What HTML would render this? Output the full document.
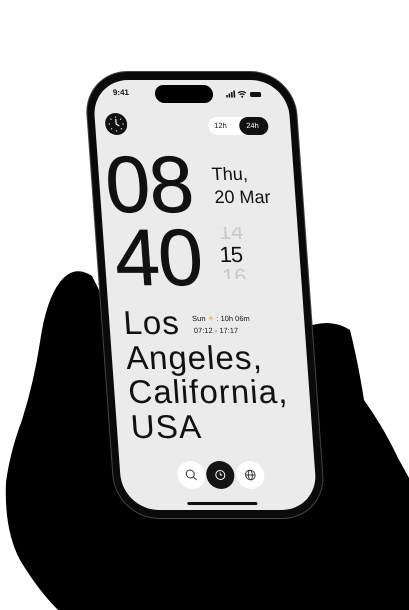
<!DOCTYPE html>
<html><head><meta charset="utf-8"><style>
html,body{margin:0;padding:0;background:#fff;width:409px;height:610px;overflow:hidden;font-family:"Liberation Sans",sans-serif}
.abs{position:absolute}
#sk{position:absolute;left:0;top:0;width:409px;height:610px;transform-origin:0 80px;transform:skewX(4.1deg)}
.t{position:absolute;white-space:nowrap;line-height:1;color:#111}
</style></head><body>
<svg class="abs" style="left:0;top:0" width="409" height="610">
<path d="M60,282 Q74,264 92,276 L104,300 L300,330 Q328,316 350,330 Q358,362 364,400 Q384,428 398,458 L409,478 L409,610 L58,610 Q38,590 20,560 Q4,530 6,482 Q10,452 22,420 Q34,382 40,342 Q46,300 60,282 Z" fill="#000"/>
</svg>
<div id="sk">
  <div class="abs" style="left:85px;top:72px;width:209px;height:446px;border-radius:43px;background:#0a0a0a;box-shadow:0 0 0 1px #444"></div>
  <div class="abs" style="left:92px;top:80px;width:195px;height:430px;border-radius:36px;background:#ebebeb;overflow:hidden">
  </div>
  <div class="t" style="left:112px;top:89px;font-size:8px;font-weight:bold">9:41</div>
  <div class="abs" style="left:154px;top:85px;width:58px;height:18px;border-radius:9px;background:#000"></div>
  <svg class="abs" style="left:225px;top:90px" width="38" height="9">
    <rect x="0" y="5" width="1.6" height="2.5" fill="#111"/><rect x="2.5" y="3.5" width="1.6" height="4" fill="#111"/><rect x="5" y="2" width="1.6" height="5.5" fill="#111"/><rect x="7.5" y="0.5" width="1.6" height="7" fill="#111"/>
    <path d="M12,3 Q16,0 20,3 M13.5,4.8 Q16,3 18.5,4.8" stroke="#111" stroke-width="1.2" fill="none"/><circle cx="16" cy="6.8" r="1" fill="#111"/>
    <rect x="24" y="2" width="11" height="5" rx="1.5" fill="#111"/>
  </svg>
  <svg class="abs" style="left:102px;top:113px" width="22" height="22" viewBox="0 0 22 22">
    <circle cx="11" cy="11" r="11" fill="#111"/>
    <path d="M11,6 V11 L14,13" stroke="#fff" stroke-width="1.2" fill="none"/>
    <path d="M11,3.5v1.3M11,17.2v1.3M3.5,11h1.3M17.2,11h1.3M5.7,5.7l.9.9M15.4,15.4l.9.9M5.7,16.3l.9-.9M15.4,6.6l.9-.9" stroke="#fff" stroke-width="1"/>
  </svg>
  <div class="abs" style="left:205px;top:117px;width:60px;height:18px;border-radius:9px;background:#fff"></div>
  <div class="t" style="left:211px;top:122px;font-size:7.5px">12h</div>
  <div class="abs" style="left:236px;top:117px;width:29px;height:18px;border-radius:9px;background:#111"></div>
  <div class="t" style="left:243px;top:122px;font-size:7.5px;color:#fff">24h</div>
  <div class="t" style="left:98px;top:145px;font-size:80px;-webkit-text-stroke:0.6px #111;letter-spacing:-1px">08</div>
  <div class="t" style="left:205px;top:165px;font-size:18px">Thu,</div>
  <div class="t" style="left:206px;top:188px;font-size:18px">20 Mar</div>
  <div class="t" style="left:102px;top:218px;font-size:80px;-webkit-text-stroke:0.6px #111;letter-spacing:-1px">40</div>
  <div class="abs" style="left:205px;top:227px;width:40px;height:14px;overflow:hidden"><div class="t" style="left:3px;top:-6px;font-size:22px;color:#c9c9c9">14</div></div>
  <div class="t" style="left:207px;top:244px;font-size:22px;letter-spacing:-1px">15</div>
  <div class="abs" style="left:205px;top:266px;width:40px;height:13px;overflow:hidden"><div class="t" style="left:3px;top:0;font-size:22px;color:#c9c9c9">16</div></div>
  <div class="abs" style="left:106px;top:306px;font-size:33px;line-height:34.5px;letter-spacing:1px;color:#111;white-space:nowrap">Los<br>Angeles,<br>California,<br>USA</div>
  <div class="t" style="left:175px;top:315px;font-size:7.5px">Sun <span style="color:#f0b400">☀</span> : 10h 06m</div>
  <div class="t" style="left:176px;top:327px;font-size:7.5px">07:12 - 17:17</div>
  <div class="abs" style="left:149px;top:461px;width:28px;height:28px;border-radius:50%;background:#fff"></div>
  <div class="abs" style="left:208px;top:461px;width:28px;height:28px;border-radius:50%;background:#fff"></div>
  <div class="abs" style="left:178px;top:461px;width:28px;height:28px;border-radius:50%;background:#151515"></div>
  <svg class="abs" style="left:149px;top:461px" width="90" height="28">
    <circle cx="13" cy="13" r="4" stroke="#333" stroke-width="1" fill="none"/><path d="M16,16 L19,19" stroke="#333" stroke-width="1"/>
    <circle cx="43" cy="14" r="4.5" stroke="#fff" stroke-width="1" fill="none"/><path d="M43,11.5 V14 H45" stroke="#fff" stroke-width="1" fill="none"/>
    <circle cx="73" cy="14" r="4.8" stroke="#333" stroke-width="0.9" fill="none"/><ellipse cx="73" cy="14" rx="2" ry="4.8" stroke="#333" stroke-width="0.9" fill="none"/><path d="M68.2,14H77.8" stroke="#333" stroke-width="0.9"/>
  </svg>
  <div class="abs" style="left:157px;top:502px;width:70px;height:3px;border-radius:2px;background:#111"></div>
</div>
</body></html>
